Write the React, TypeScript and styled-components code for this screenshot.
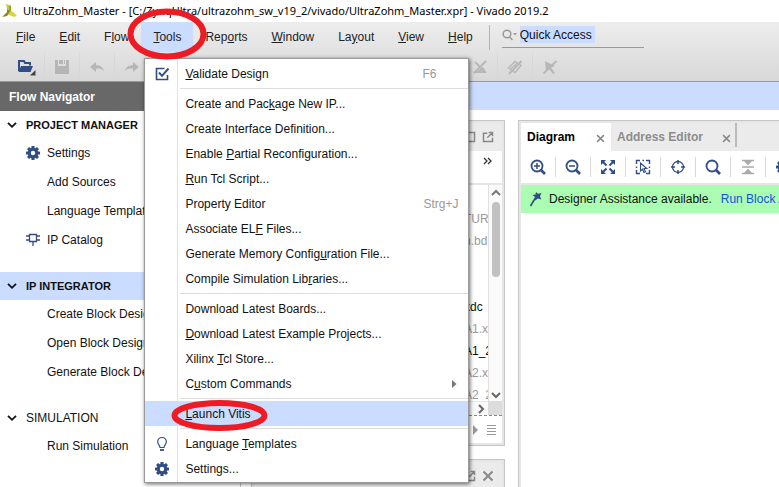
import React from "react";
import styled, { createGlobalStyle, css } from "styled-components";

const NAVY = "#314d85";
const SELECT = "#cadcff";
const PANEL = "#ebebeb";

const GlobalStyle = createGlobalStyle`
  *, *::before, *::after { box-sizing: border-box; }
  html, body, #root { height: 100%; }
  body {
    margin: 0;
    overflow: hidden;
    background: #fff;
    color: #111;
    font: 12px/16px "Liberation Sans", Arial, sans-serif;
  }
  button, input { font: inherit; color: inherit; }
  svg { display: block; flex: none; }
`;

const plainButton = css`
  border: 0;
  margin: 0;
  padding: 0;
  background: none;
  text-align: left;
  cursor: default;
`;

const Window = styled.div`
  display: flex;
  flex-direction: column;
  height: 100vh;
  overflow: hidden;
`;

const TitleBar = styled.div`
  flex: none;
  display: flex;
  align-items: center;
  gap: 5px;
  height: 22px;
  padding-left: 1px;
  background: #fff;
  color: #000;
  font-family: "Noto Sans", "Open Sans", sans-serif;
  font-size: 11px;
  white-space: nowrap;
`;

const Header = styled.header`
  flex: none;
  background: linear-gradient(#ededed, #d8d8d8);
  border-bottom: 1px solid #999;
`;

const MenuBar = styled.nav`
  display: flex;
  height: 31px;
  padding-left: 4px;
`;

const MenuSlot = styled.div`
  position: relative;
  display: flex;
`;

const MenuBarButton = styled.button<{ $open?: boolean }>`
  ${plainButton}
  height: 30px;
  padding: 0 12px;
  color: #222;
  background: ${(p) => (p.$open ? SELECT : "none")};
`;

const BarDivider = styled.div`
  width: 1px;
  height: 25px;
  margin: 3px 12px 0 4px;
  background: #b4b4b4;
`;

const SearchBox = styled.label`
  display: flex;
  align-items: center;
  gap: 3px;
  width: 142px;
  height: 26px;
  border-bottom: 1px solid #999;
`;

const SearchInput = styled.input`
  width: 75px;
  height: 17px;
  border: 0;
  padding: 0;
  outline: 0;
  background: ${SELECT};
  color: #111;
`;

const ToolBar = styled.div`
  display: flex;
  align-items: center;
  height: 28px;
  padding: 0 9px;
`;

const ToolButton = styled.button`
  ${plainButton}
  flex: none;
  display: grid;
  place-items: center;
  width: 35px;
  height: 28px;
  & + & { border-left: 1px solid #d8d8d8; }
`;

const ToolGap = styled.div`
  flex: none;
  width: 278px;
`;

const Popup = styled.div`
  position: absolute;
  z-index: 10;
  top: 36px;
  left: 3px;
  width: 325px;
  padding: 2px 0 1px;
  border: 1px solid #9a9a9a;
  background: linear-gradient(90deg, #fff 32px, #e2e2e2 32px, #e2e2e2 33px, #fff 33px);
  box-shadow: 1px 1px 4px rgba(0, 0, 0, 0.6);
  color: #111;
`;

const PopupItem = styled.button<{ $active?: boolean }>`
  ${plainButton}
  display: grid;
  grid-template-columns: 34px 1fr auto;
  align-items: center;
  column-gap: 6px;
  width: 100%;
  height: 25px;
  padding-right: 10px;
  white-space: nowrap;
  background: ${(p) => (p.$active ? SELECT : "none")};
`;

const IconCell = styled.span`
  display: grid;
  place-items: center;
`;

const Shortcut = styled.span<{ $wide?: boolean }>`
  min-width: ${(p) => (p.$wide ? "36px" : "0")};
  color: #999;
`;

const PopupRule = styled.hr`
  height: 1px;
  margin: 2px 0 2px 35px;
  border: 0;
  background: #ddd;
`;

const Ring = styled.svg<{ $left: number; $top: number }>`
  position: absolute;
  z-index: 20;
  left: ${(p) => p.$left}px;
  top: ${(p) => p.$top}px;
  pointer-events: none;
`;

const Body = styled.div`
  flex: 1;
  min-height: 0;
  display: grid;
  grid-template-columns: 241px 1fr;
`;

const Sidebar = styled.aside`
  display: flex;
  flex-direction: column;
  min-width: 0;
  border-right: 1px solid #c6c6c6;
  background: #fff;
`;

const SidebarTitle = styled.div`
  height: 29px;
  padding: 7px 9px;
  background: #686868;
  color: #fff;
  font-weight: bold;
`;

const Section = styled.section`
  display: flex;
  flex-direction: column;
  gap: 2px;
  margin-bottom: 19px;
`;

const SectionHeader = styled.button<{ $active?: boolean; $bold?: boolean }>`
  ${plainButton}
  display: flex;
  align-items: center;
  gap: 9px;
  height: 28px;
  margin-bottom: -2px;
  padding-left: 7px;
  font-size: ${(p) => (p.$bold ? "11px" : "12px")};
  font-weight: ${(p) => (p.$bold ? "bold" : "normal")};
  background: ${(p) => (p.$active ? SELECT : "none")};
`;

const NavItem = styled.button`
  ${plainButton}
  display: grid;
  grid-template-columns: 16px 1fr;
  align-items: center;
  gap: 6px;
  height: 27px;
  padding-left: 25px;
  white-space: nowrap;
`;

const Main = styled.main`
  display: flex;
  flex-direction: column;
  min-width: 0;
`;

const Banner = styled.div`
  flex: none;
  height: 28px;
  background: ${SELECT};
`;

const Panels = styled.div`
  flex: 1;
  min-height: 0;
  display: grid;
  grid-template-columns: 254px 1fr;
  gap: 13px;
  padding: 10px 0 0 10px;
`;

const LeftStack = styled.div`
  display: grid;
  grid-template-rows: 326px 1fr;
  gap: 13px;
  min-height: 0;
`;

const Panel = styled.section<{ $bleed?: boolean }>`
  display: flex;
  flex-direction: column;
  min-width: 0;
  min-height: 0;
  overflow: hidden;
  border: 1px solid #c6c6c6;
  border-right-width: ${(p) => (p.$bleed ? "0" : "1px")};
  border-bottom-width: ${(p) => (p.$bleed ? "0" : "1px")};
  padding: ${(p) => (p.$bleed ? "2px 0 0 2px" : "2px")};
  background: #e6e6e6;
`;

const PanelHead = styled.div`
  flex: none;
  display: flex;
  align-items: center;
  justify-content: flex-end;
  gap: 6px;
  height: 28px;
  padding-right: 8px;
  background: ${PANEL};
`;

const PanelTools = styled.div<{ $end?: boolean }>`
  flex: none;
  display: flex;
  align-items: center;
  justify-content: ${(p) => (p.$end ? "flex-end" : "flex-start")};
  height: 32px;
  margin-bottom: 2px;
  background: #fff;
  overflow: hidden;
`;

const MoreButton = styled.button`
  ${plainButton}
  display: grid;
  place-items: center;
  width: 20px;
  height: 20px;
  margin: 0 4px 12px 0;
`;

const TreeArea = styled.div`
  flex: 1;
  min-height: 0;
  display: grid;
  grid-template-columns: 1fr 14px;
  grid-template-rows: 1fr 14px;
  background: #fff;
`;

const FileList = styled.ul`
  min-height: 0;
  margin: 0;
  padding: 23px 0 0 210px;
  overflow: hidden;
  list-style: none;
  white-space: nowrap;
`;

const FileRow = styled.li<{ $dim?: boolean }>`
  height: 22px;
  line-height: 22px;
  color: ${(p) => (p.$dim ? "#9a9a9a" : "#111")};
`;

const ScrollTrack = styled.div`
  display: flex;
  flex-direction: column;
  align-items: center;
  gap: 5px;
  padding: 4px 0 2px;
  border-left: 1px solid #e0e0e0;
  background: #fafafa;
`;

const ScrollThumb = styled.div`
  width: 8px;
  height: 75px;
  margin-bottom: auto;
  border-radius: 4px;
  background: #c1c1c1;
`;

const ScrollFoot = styled.div`
  display: flex;
  align-items: center;
  justify-content: flex-end;
  padding-right: 2px;
  border-top: 1px solid #e6e6e6;
  background: #fafafa;
`;

const Corner = styled.div`
  background: #dcdcdc;
`;

const PanelFoot = styled.div`
  flex: none;
  display: flex;
  align-items: center;
  justify-content: flex-end;
  gap: 9px;
  height: 28px;
  padding-right: 6px;
  border-top: 1px dashed #888;
  background: #fff;
`;

const Tabs = styled.div`
  flex: none;
  display: flex;
  height: 28px;
  background: ${PANEL};
`;

const Tab = styled.div<{ $active?: boolean }>`
  display: flex;
  align-items: center;
  justify-content: space-between;
  width: ${(p) => (p.$active ? "90px" : "126px")};
  padding: 0 6px;
  background: ${(p) => (p.$active ? "#fff" : "none")};
  color: ${(p) => (p.$active ? "#000" : "#8c8c8c")};
`;

const TabButton = styled.button`
  ${plainButton}
  font-weight: bold;
`;

const CloseButton = styled.button`
  ${plainButton}
  margin-top: 2px;
`;

const TabDivider = styled.div`
  width: 2px;
  height: 24px;
  margin-left: -2px;
  background: #bbb;
`;

const CanvasTool = styled.button`
  ${plainButton}
  flex: none;
  display: grid;
  place-items: center;
  width: 35px;
  height: 20px;
  border-right: 1px solid #d8d8d8;
`;

const Assist = styled.div`
  flex: none;
  display: flex;
  align-items: center;
  gap: 5px;
  height: 28px;
  padding: 0 7px;
  background: #abfdb1;
  white-space: nowrap;
  overflow: hidden;
`;

const AssistLink = styled.a`
  margin-left: 4px;
  color: #1450e6;
  text-decoration: none;
`;

const Canvas = styled.div`
  flex: 1;
  background: #fff;
`;

function Glyph({ size = 16, color = NAVY, w = 2, children }: { size?: number; color?: string; w?: number; children: React.ReactNode }) {
  return (
    <svg width={size} height={size} viewBox="0 0 16 16" fill="none" stroke={color} strokeWidth={w} aria-hidden="true">
      {children}
    </svg>
  );
}

const Gear = () => (
  <Glyph w={0}>
    <g fill={NAVY}>
      {[0, 45, 90, 135].map((a) => (
        <rect key={a} x="6.4" y="1" width="3.2" height="14" rx=".6" transform={`rotate(${a} 8 8)`} />
      ))}
      <circle cx="8" cy="8" r="5.3" />
    </g>
    <circle cx="8" cy="8" r="2.2" fill="#fff" />
  </Glyph>
);

const IpChip = () => (
  <Glyph w={1.3}>
    <path d="M4.500 2.500h7v7h-7zM1 4h3.500M1 8h3.500M11.500 4H15M11.500 8H15M8 9.500V14" />
  </Glyph>
);

const Chevron = () => (
  <svg width="10" height="8" viewBox="0 0 10 8" fill="none" stroke="#111" strokeWidth="1.8" aria-hidden="true">
    <path d="M1 1.8l4 4 4-4" />
  </svg>
);

const Check = () => (
  <Glyph w={1.6}>
    <path d="M10.500 2.500h-8v11h11V9" />
    <path d="M5 6.500L8 9.800l6.500-7.300" strokeWidth="2" />
  </Glyph>
);

const Bulb = () => (
  <Glyph w={1.2}>
    <path d="M6 11.500C6 9.500 3.700 8.700 3.700 5.800a4.300 4.300 0 018.600 0c0 2.900-2.300 3.700-2.300 5.700z" />
    <path d="M6 14h4" strokeWidth="1.8" />
  </Glyph>
);

const Cross = ({ size = 9 }: { size?: number }) => (
  <Glyph size={size} color="#888" w={2.6}>
    <path d="M2 2l12 12M14 2L2 14" />
  </Glyph>
);

const PopOut = () => (
  <Glyph size={12} color="#888" w={2}>
    <path d="M7 3H2v11h12V9M9 2h5v5M14 2L7 9" />
  </Glyph>
);

const Lens = ({ sign }: { sign?: "plus" | "minus" }) => (
  <Glyph>
    <circle cx="7" cy="7" r="5.5" strokeWidth="1.8" />
    <path d="M11 11l4 4" strokeWidth="2.6" />
    {sign && <path d={sign === "plus" ? "M4 7h6M7 4v6" : "M4 7h6"} strokeWidth="1.5" />}
  </Glyph>
);

const Fit = () => (
  <Glyph w={2}>
    <path d="M10 1h5v5zM6 1H1v5zM10 15h5v-5zM6 15H1v-5z" fill={NAVY} stroke="none" />
    <path d="M13 3l-3.500 3.500M3 3l3.500 3.500M13 13L9.500 9.500M3 13l3.500-3.500" />
  </Glyph>
);

const SelectArea = () => (
  <Glyph w={1.4}>
    <path d="M1.500 5V1.500H5M11 1.500h3.500V5M1.500 11v3.500H5M11 14.500h3.500V11M7.500 1.500H9M1.500 7.500V9M14.500 7.500V9" />
    <path d="M5.500 4v8l2-1.800L9 13.500l1.500-.8L9 9.500h2.800z" strokeWidth="1.1" />
  </Glyph>
);

const Target = () => (
  <Glyph w={1.3}>
    <circle cx="8" cy="8" r="5.5" />
    <path d="M8 1v4M8 11v4M1 8h4M11 8h4" strokeWidth="1.5" />
  </Glyph>
);

const Collapse = () => (
  <Glyph color="#aaa" w={1.6}>
    <path d="M2 8h12M2 1.500h12M2 14.500h12" />
    <path d="M4 2h8L8 6.500zM4 14h8L8 9.500z" fill="#aaa" stroke="none" />
  </Glyph>
);

const Wand = () => (
  <Glyph>
    <path d="M2.500 15L8 6" strokeWidth="1.6" />
    <path d="M8 1l2 1.800L13.500 2 12 5l1.200 3.500L10 7.500 7 9.500 7 6 4.500 4 7.500 3.500z" fill={NAVY} stroke="none" />
  </Glyph>
);

const ReplyArrow = ({ flip }: { flip?: boolean }) => (
  <Glyph color="#bababa" w={0}>
    <path
      d="M1 8l6-5v3.300c4 0 7 1.700 8 5.700-2-2.300-4.500-2.600-8-2.500V13z"
      fill="#b6b6b6"
      transform={flip ? "translate(16 0) scale(-1 1)" : undefined}
    />
  </Glyph>
);

function mnemonic(label: string) {
  const at = label.indexOf("&");
  if (at < 0) return label;
  return (
    <span>
      {label.slice(0, at)}
      <u>{label[at + 1]}</u>
      {label.slice(at + 2)}
    </span>
  );
}

type Entry = { label: string; icon?: React.ReactNode; keys?: string; sub?: boolean; active?: boolean } | null;

const toolsMenu: Entry[] = [
  { label: "&Validate Design", icon: <Check />, keys: "F6" },
  null,
  { label: "Create and Pac&kage New IP..." },
  { label: "Create Interface Definition..." },
  { label: "Enable &Partial Reconfiguration..." },
  { label: "&Run Tcl Script..." },
  { label: "Property Editor", keys: "Strg+J" },
  { label: "Associate EL&F Files..." },
  { label: "Generate Memory Config&uration File..." },
  { label: "Compile Simulation Lib&raries..." },
  null,
  { label: "Download Latest Boards..." },
  { label: "&Download Latest Example Projects..." },
  { label: "Xilinx &Tcl Store..." },
  { label: "C&ustom Commands", sub: true },
  null,
  { label: "&Launch Vitis", active: true },
  null,
  { label: "Language &Templates", icon: <Bulb /> },
  { label: "Settings...", icon: <Gear /> },
];

type NavSection = {
  title: string;
  bold?: boolean;
  active?: boolean;
  items: { label: string; icon?: React.ReactNode }[];
};

const sections: NavSection[] = [
  {
    title: "PROJECT MANAGER",
    bold: true,
    items: [
      { label: "Settings", icon: <Gear /> },
      { label: "Add Sources" },
      { label: "Language Templates" },
      { label: "IP Catalog", icon: <IpChip /> },
    ],
  },
  {
    title: "IP INTEGRATOR",
    bold: true,
    active: true,
    items: [{ label: "Create Block Design" }, { label: "Open Block Design" }, { label: "Generate Block Design" }],
  },
  { title: "SIMULATION", items: [{ label: "Run Simulation" }] },
];

const files: { name: string; dim?: boolean }[] = [
  { name: "TUR", dim: true },
  { name: "n.bd", dim: true },
  { name: "" },
  { name: "" },
  { name: "xdc" },
  { name: "A1.xdc", dim: true },
  { name: "A1_2.xdc" },
  { name: "A2.xdc", dim: true },
  { name: "A2_2.xdc", dim: true },
];

const canvasTools: [string, React.ReactNode][] = [
  ["Zoom in", <Lens sign="plus" />],
  ["Zoom out", <Lens sign="minus" />],
  ["Zoom fit", <Fit />],
  ["Select area", <SelectArea />],
  ["Center", <Target />],
  ["Search", <Lens />],
  ["Collapse all", <Collapse />],
  ["Settings", <Gear />],
];

function ToolsPopup() {
  return (
    <Popup role="menu" aria-label="Tools">
      {toolsMenu.map((entry, i) =>
        entry === null ? (
          <PopupRule key={i} />
        ) : (
          <PopupItem key={i} role="menuitem" $active={entry.active}>
            <IconCell>{entry.icon}</IconCell>
            {mnemonic(entry.label)}
            {entry.keys && <Shortcut $wide={entry.keys === "F6"}>{entry.keys}</Shortcut>}
            {entry.sub && (
              <svg width="7" height="8" viewBox="0 0 7 8" aria-hidden="true">
                <path d="M1 0l4.500 4L1 8z" fill="#777" />
              </svg>
            )}
          </PopupItem>
        ),
      )}
    </Popup>
  );
}

export default function App() {
  return (
    <Window>
      <GlobalStyle />
      <TitleBar>
        <svg width="17" height="16" viewBox="0 0 17 16" aria-hidden="true">
          <path d="M5 1l5 1.500V8L6 6z" fill="#c3cf3c" />
          <path d="M6 6l4 2-4 5-5 1 5-5z" fill="#8a8a26" />
          <path d="M10 7.500l6 5-3 1.500-6-2.500z" fill="#dbd53a" />
          <path d="M8 3l2-.5V8L8 9z" fill="#9aa52c" />
        </svg>
        <span>UltraZohm_Master - [C:/ZynqUltra/ultrazohm_sw_v19_2/vivado/UltraZohm_Master.xpr] - Vivado 2019.2</span>
      </TitleBar>
      <Header>
        <MenuBar aria-label="Main menu">
          {["&File", "&Edit", "F&low", "&Tools", "Rep&orts", "&Window", "La&yout", "&View", "&Help"].map((label) =>
            label === "&Tools" ? (
              <MenuSlot key={label}>
                <MenuBarButton $open aria-expanded="true">
                  {mnemonic(label)}
                </MenuBarButton>
                <ToolsPopup />
                <Ring $left={-14} $top={-14} width="80" height="52" viewBox="0 0 80 52" aria-hidden="true">
                  <ellipse cx="40" cy="26" rx="36.5" ry="22.5" fill="none" stroke="#ed1c24" strokeWidth="6" />
                </Ring>
                <Ring $left={30} $top={378} width="97" height="31" viewBox="0 0 97 31" aria-hidden="true">
                  <ellipse cx="48.5" cy="15.5" rx="45" ry="12.5" fill="none" stroke="#ed1c24" strokeWidth="6" />
                </Ring>
              </MenuSlot>
            ) : (
              <MenuBarButton key={label}>{mnemonic(label)}</MenuBarButton>
            ),
          )}
          <BarDivider />
          <SearchBox>
            <svg width="15" height="12" viewBox="0 0 15 12" fill="none" stroke="#999" strokeWidth="1.5" aria-hidden="true">
              <circle cx="5" cy="5" r="3.8" />
              <path d="M7.500 8l3 3" />
              <path d="M11 4h4l-2 2.500z" fill="#999" stroke="none" />
            </svg>
            <SearchInput aria-label="Quick Access" defaultValue="Quick Access" />
          </SearchBox>
        </MenuBar>
        <ToolBar>
          <ToolButton aria-label="Open">
            <svg width="19" height="18" viewBox="0 0 19 18" aria-hidden="true">
              <path d="M2 13V3h5l1 2h5v2.500" fill="none" stroke={NAVY} strokeWidth="2" />
              <path d="M4 8h12l-2.500 6H1.500z" fill={NAVY} />
              <path d="M18.500 12v5.500H13z" fill="#444" />
            </svg>
          </ToolButton>
          <ToolButton aria-label="Save">
            <Glyph w={0}>
              <path d="M1 1h3v6h8V1h3v14H1z" fill="#b6b6b6" />
              <path d="M5 1h4v4H5zM10 1h1v4h-1z" fill="#b6b6b6" />
            </Glyph>
          </ToolButton>
          <ToolButton aria-label="Undo">
            <ReplyArrow />
          </ToolButton>
          <ToolButton aria-label="Redo">
            <ReplyArrow flip />
          </ToolButton>
          <ToolButton aria-label="Run">
            <svg width="16" height="28" viewBox="0 0 16 28" fill="#eee" stroke="#aaa" aria-hidden="true">
              <path d="M8 1l7 13-7 13-7-13z" />
            </svg>
          </ToolButton>
          <ToolGap />
          <ToolButton aria-label="Clear markers">
            <Glyph color="#b8b8b8">
              <path d="M2 14L14 2M3 3l9 9" />
              <path d="M1 14h14l-4-6-4 3z" fill="#b8b8b8" stroke="none" />
            </Glyph>
          </ToolButton>
          <ToolButton aria-label="Hide highlights">
            <Glyph color="#b8b8b8" w={1.5}>
              <path d="M1.500 9L8 2.500l6 4L8 13.500zM4 9.500l6-5" />
              <path d="M2 15L14.500 2" strokeWidth="2" />
            </Glyph>
          </ToolButton>
          <ToolButton aria-label="Unselect">
            <Glyph color="#b8b8b8">
              <path d="M3 2l10 5-4 1.500 4 5.500-2 1-4-5-3 2z" fill="#b8b8b8" stroke="none" />
              <path d="M1.500 14.500L14.500 2" />
            </Glyph>
          </ToolButton>
        </ToolBar>
      </Header>
      <Body>
        <Sidebar>
          <SidebarTitle>Flow Navigator</SidebarTitle>
          {sections.map((s) => (
            <Section key={s.title}>
              <SectionHeader $active={s.active} $bold={s.bold}>
                <Chevron />
                {s.title}
              </SectionHeader>
              {s.items.map((item) => (
                <NavItem key={item.label}>
                  <IconCell>{item.icon}</IconCell>
                  {item.label}
                </NavItem>
              ))}
            </Section>
          ))}
        </Sidebar>
        <Main>
          <Banner />
          <Panels>
            <LeftStack>
              <Panel aria-label="Sources">
                <PanelHead>
                  <Glyph size={12} color="#888">
                    <path d="M2 2h12v12H2z" />
                  </Glyph>
                  <PopOut />
                </PanelHead>
                <PanelTools $end>
                  <MoreButton aria-label="More">
                    <svg width="10" height="8" viewBox="0 0 10 8" fill="none" stroke="#333" strokeWidth="1.3" aria-hidden="true">
                      <path d="M1 1l3 3-3 3M5 1l3 3-3 3" />
                    </svg>
                  </MoreButton>
                </PanelTools>
                <TreeArea>
                  <FileList>
                    {files.map((f, i) => (
                      <FileRow key={i} $dim={f.dim}>
                        {f.name}
                      </FileRow>
                    ))}
                  </FileList>
                  <ScrollTrack>
                    <svg width="10" height="8" viewBox="0 0 10 8" fill="none" stroke="#777" strokeWidth="2" aria-hidden="true">
                      <path d="M1 6l4-4 4 4" />
                    </svg>
                    <ScrollThumb />
                    <svg width="10" height="8" viewBox="0 0 10 8" fill="none" stroke="#666" strokeWidth="2" aria-hidden="true">
                      <path d="M1 2l4 4 4-4" />
                    </svg>
                  </ScrollTrack>
                  <ScrollFoot>
                    <svg width="8" height="10" viewBox="0 0 8 10" fill="none" stroke="#666" strokeWidth="2" aria-hidden="true">
                      <path d="M1 1l4 4-4 4" />
                    </svg>
                  </ScrollFoot>
                  <Corner />
                </TreeArea>
                <PanelFoot>
                  <svg width="6" height="10" viewBox="0 0 6 10" aria-hidden="true">
                    <path d="M1 0l5 5-5 5z" fill="#999" />
                  </svg>
                  <svg width="9" height="11" viewBox="0 0 9 11" stroke="#999" strokeWidth="1" aria-hidden="true">
                    <path d="M0 1.500h9M0 4.500h9M0 7.500h9M0 10.500h9" />
                  </svg>
                </PanelFoot>
              </Panel>
              <Panel aria-label="Properties">
                <PanelHead>
                  <PopOut />
                  <Cross size={12} />
                </PanelHead>
              </Panel>
            </LeftStack>
            <Panel $bleed aria-label="Block design">
              <Tabs role="tablist">
                <Tab $active>
                  <TabButton role="tab" aria-selected="true">
                    Diagram
                  </TabButton>
                  <CloseButton aria-label="Close Diagram">
                    <Cross />
                  </CloseButton>
                </Tab>
                <Tab>
                  <TabButton role="tab" aria-selected="false">
                    Address Editor
                  </TabButton>
                  <CloseButton aria-label="Close Address Editor">
                    <Cross />
                  </CloseButton>
                </Tab>
                <TabDivider />
              </Tabs>
              <PanelTools>
                {canvasTools.map(([label, icon]) => (
                  <CanvasTool key={label} aria-label={label}>
                    {icon}
                  </CanvasTool>
                ))}
              </PanelTools>
              <Assist>
                <Wand />
                <span>Designer Assistance available.</span>
                <AssistLink href="#run">Run Block Automation</AssistLink>
              </Assist>
              <Canvas />
            </Panel>
          </Panels>
        </Main>
      </Body>
    </Window>
  );
}
